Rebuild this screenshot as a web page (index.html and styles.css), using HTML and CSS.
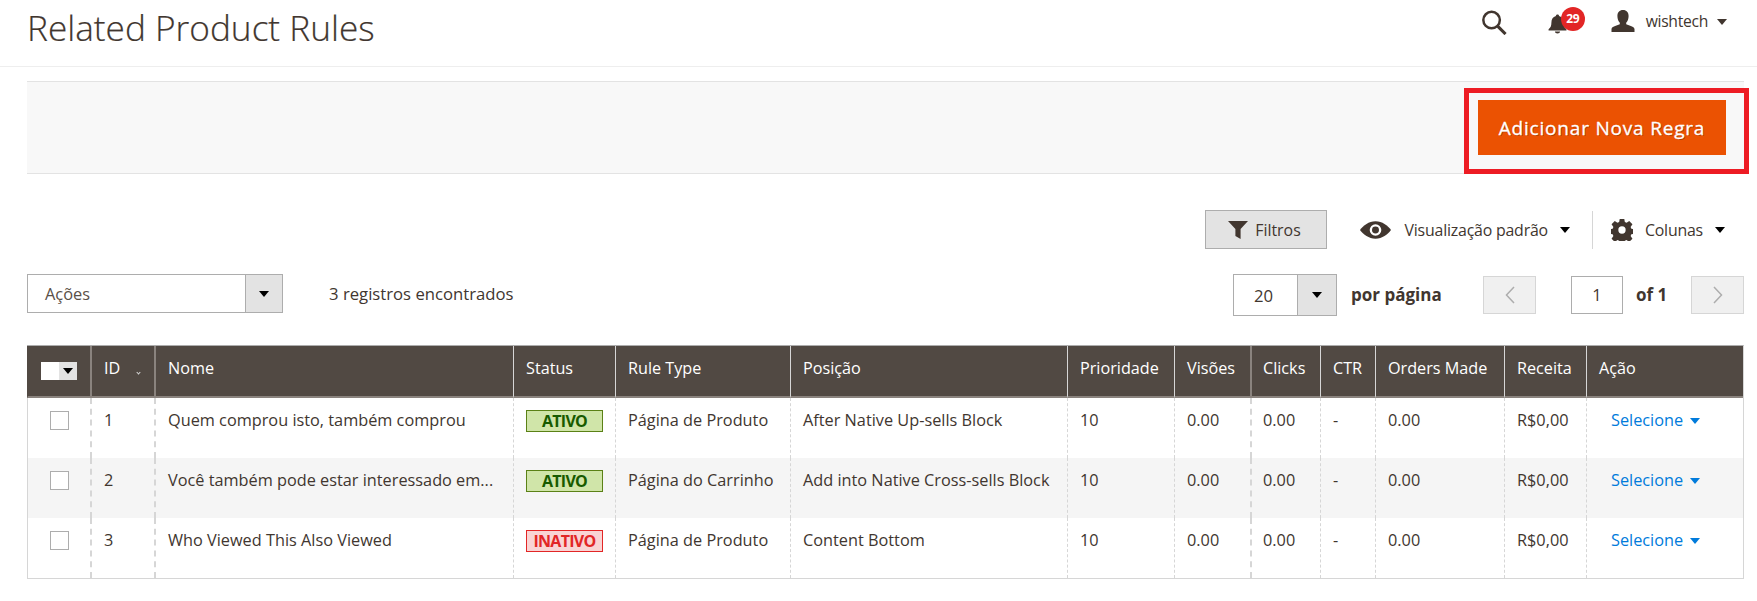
FILE: index.html
```html
<!DOCTYPE html>
<html lang="pt">
<head>
<meta charset="utf-8">
<title>Related Product Rules</title>
<link rel="stylesheet" href="styles.css">
</head>
<body>
<header class="page-header">
  <h1 class="title">Related Product Rules</h1>
  <div class="header-actions">
    <svg class="ic-search" viewBox="0 0 26 26"><circle cx="10.5" cy="10.5" r="8.6" fill="none" stroke="#41362f" stroke-width="2.6"/><path d="M17 17l8 8" stroke="#41362f" stroke-width="3.2" fill="none"/></svg>
    <span class="bell">
      <svg class="ic-bell" viewBox="0 0 20 22"><path d="M10 1.5c-1 0-1.7.7-1.7 1.6C5.2 4 3.6 6.500 3.600 10c0 3.800-1 5.500-3 7v1.400h18.800V17c-2-1.500-3-3.200-3-7 0-3.500-1.600-6-4.700-6.900 0-.9-.7-1.600-1.700-1.600z" fill="#41362f"/><path d="M7.300 19.400h5.400c0 1.300-1.200 2.100-2.700 2.100s-2.700-.8-2.700-2.100z" fill="#41362f"/></svg>
      <span class="badge">29</span>
    </span>
    <svg class="ic-user" viewBox="0 0 24 22"><path d="M12 0c3.600 0 5.600 2.500 5.600 6 0 3-1 5.300-2.400 6.700v1.600c3.400 1.300 7.800 2.300 8.300 4.600V22H.5v-3.100c.5-2.300 4.900-3.300 8.300-4.600v-1.600C7.400 11.300 6.400 9 6.400 6c0-3.500 2-6 5.600-6z" fill="#41362f"/></svg>
    <span class="user-name">wishtech</span>
    <span class="caret caret-user"></span>
  </div>
</header>

<main class="content">
  <section class="action-bar">
    <button class="primary" type="button">Adicionar Nova Regra</button>
    <span class="highlight"></span>
  </section>

  <section class="tools">
    <button class="filter-btn" type="button">
      <svg class="ic-filter" viewBox="0 0 20 18"><path d="M0 0h20L12.600 8V18L7.400 15V8z" fill="#41362f"/></svg>
      Filtros
    </button>
    <svg class="ic-eye" viewBox="0 0 32 18"><path d="M16 0c7 0 12.500 4.500 16 9-3.500 4.500-9 9-16 9S3.500 13.500 0 9c3.500-4.500 9-9 16-9z" fill="#41362f"/><circle cx="16" cy="9" r="6" fill="#fff"/><circle cx="16" cy="9" r="3.600" fill="#41362f"/></svg>
    <span class="tool-label view-label">Visualização padrão</span>
    <span class="caret caret-view"></span>
    <span class="tool-sep"></span>
    <svg class="ic-gear" viewBox="0 0 24 24"><path fill-rule="evenodd" d="M9.500 0h5l.6 3.400 1.900.8 2.900-2 3.500 3.500-2 2.900.8 1.900 3.400.6v5l-3.400.6-.8 1.900 2 2.900-3.500 3.500-2.900-2-1.900.8-.6 3.400h-5l-.6-3.400-1.900-.8-2.900 2-3.500-3.500 2-2.900-.8-1.900-3.400-.6v-5l3.400-.6.8-1.900-2-2.900 3.500-3.500 2.900 2 1.900-.8zM12 8a4 4 0 1 0 0 8 4 4 0 0 0 0-8z" fill="#41362f"/></svg>
    <span class="tool-label col-label">Colunas</span>
    <span class="caret caret-col"></span>
  </section>

  <section class="pager-row">
    <div class="select select-actions"><span class="select-value">Ações</span><span class="select-arrow"><span class="caret"></span></span></div>
    <span class="count">3 registros encontrados</span>
    <div class="select select-size"><span class="select-value">20</span><span class="select-arrow"><span class="caret"></span></span></div>
    <span class="per-page">por página</span>
    <span class="page-btn"><svg viewBox="0 0 10 18"><path d="M9 1L1.500 9 9 17" fill="none" stroke="#adadad" stroke-width="1.500"/></svg></span>
    <span class="page-input">1</span>
    <span class="of">of 1</span>
    <span class="page-btn"><svg viewBox="0 0 10 18"><path d="M1 1l7.500 8L1 17" fill="none" stroke="#adadad" stroke-width="1.500"/></svg></span>
  </section>

  <table class="grid">
    <colgroup>
      <col class="c-check"><col class="c-id"><col class="c-name"><col class="c-status"><col class="c-type"><col class="c-pos"><col class="c-prio"><col class="c-views"><col class="c-clicks"><col class="c-ctr"><col class="c-orders"><col class="c-rev"><col class="c-act">
    </colgroup>
    <thead>
      <tr>
        <th class="check-head"><span class="multi"><span class="multi-box"></span><span class="multi-arrow"><span class="caret"></span></span></span></th>
        <th class="thick lead">ID<span class="sort"></span></th>
        <th class="thick lead">Nome</th>
        <th>Status</th>
        <th>Rule Type</th>
        <th>Posição</th>
        <th>Prioridade</th>
        <th>Visões</th>
        <th class="thick">Clicks</th>
        <th>CTR</th>
        <th>Orders Made</th>
        <th>Receita</th>
        <th>Ação</th>
      </tr>
    </thead>
    <tbody>
      <tr>
        <td class="check-cell"><span class="box"></span></td><td class="thick lead">1</td><td class="thick lead">Quem comprou isto, também comprou</td>
        <td class="status-cell"><span class="status on">ATIVO</span></td><td>Página de Produto</td><td>After Native Up-sells Block</td><td>10</td><td>0.00</td><td class="thick">0.00</td><td>-</td><td>0.00</td><td>R$0,00</td>
        <td class="act-cell"><a class="act">Selecione</a><span class="caret caret-blue"></span></td>
      </tr>
      <tr class="alt">
        <td class="check-cell"><span class="box"></span></td><td class="thick lead">2</td><td class="thick lead">Você também pode estar interessado em...</td>
        <td class="status-cell"><span class="status on">ATIVO</span></td><td>Página do Carrinho</td><td>Add into Native Cross-sells Block</td><td>10</td><td>0.00</td><td class="thick">0.00</td><td>-</td><td>0.00</td><td>R$0,00</td>
        <td class="act-cell"><a class="act">Selecione</a><span class="caret caret-blue"></span></td>
      </tr>
      <tr>
        <td class="check-cell"><span class="box"></span></td><td class="thick lead">3</td><td class="thick lead">Who Viewed This Also Viewed</td>
        <td class="status-cell"><span class="status off">INATIVO</span></td><td>Página de Produto</td><td>Content Bottom</td><td>10</td><td>0.00</td><td class="thick">0.00</td><td>-</td><td>0.00</td><td>R$0,00</td>
        <td class="act-cell"><a class="act">Selecione</a><span class="caret caret-blue"></span></td>
      </tr>
    </tbody>
  </table>
</main>
</body>
</html>
```

FILE: styles.css
```css
* { box-sizing: border-box; }
html, body { margin: 0; padding: 0; }
body {
  background: #fff;
  color: #41362f;
  font-family: "Open Sans", "Noto Sans", sans-serif;
  font-size: 16.4px;
  overflow: hidden;
  height: 601px;
}

/* header */
.page-header {
  height: 67px;
  border-bottom: 1px solid #eeeeee;
  padding-left: 27px;
  display: flex;
  align-items: flex-start;
  justify-content: space-between;
}
.title {
  margin: 0;
  padding-top: 4px;
  font-size: 35.2px;
  line-height: 46px;
  font-weight: 300;
  color: #41362f;
  -webkit-text-stroke: 0.2px #41362f;
}
.header-actions { display: flex; align-items: flex-start; padding-top: 10px; padding-right: 30px; }
.ic-search { width: 26px; height: 25px; display: block; }
.bell { position: relative; display: block; width: 20px; height: 22px; margin-left: 41px; }
.ic-bell { width: 19px; height: 21px; display: block; margin-top: 3px; }
.badge {
  position: absolute;
  left: 13px;
  top: -3px;
  width: 24px;
  height: 24px;
  border-radius: 50%;
  background: #e22626;
  color: #fff;
  font-size: 12px;
  font-weight: 700;
  line-height: 24px;
  text-align: center;
  letter-spacing: -0.5px;
}
.ic-user { width: 24px; height: 22px; display: block; margin-left: 43px; }
.user-name { font-size: 15.7px; line-height: 22px; margin-left: 11px; letter-spacing: -0.3px; }
.caret {
  display: inline-block;
  width: 0;
  height: 0;
  border-left: 5px solid transparent;
  border-right: 5px solid transparent;
  border-top: 6px solid #000;
}
.caret-user { border-top-color: #41362f; margin-left: 9px; margin-top: 9px; }

/* action bar */
.content { padding: 14px 13px 0 27px; }
.action-bar {
  position: relative;
  height: 93px;
  background: #f8f8f8;
  border-top: 1px solid #e3e3e3;
  border-bottom: 1px solid #e3e3e3;
  display: flex;
  justify-content: flex-end;
  align-items: flex-start;
  padding: 18px 18px 0 0;
}
.primary {
  width: 248px;
  height: 55px;
  border: 0;
  background: #eb5202;
  color: #fff;
  font-family: inherit;
  font-size: 19px;
  font-weight: 400;
  letter-spacing: 0.8px;
  text-shadow: 1px 1px 0 rgba(0,0,0,.25);
  padding: 0;
  -webkit-text-stroke: 0.3px #fff;
}
.highlight {
  position: absolute;
  left: 1437px;
  top: 6px;
  width: 285px;
  height: 86px;
  border: 5px solid #ed1c24;
  pointer-events: none;
}

/* tools row */
.tools { display: flex; align-items: center; justify-content: flex-end; height: 39px; margin-top: 36px; }
.filter-btn {
  width: 122px;
  height: 39px;
  background: #e3e3e3;
  border: 1px solid #adadad;
  color: #41362f;
  font-family: inherit;
  font-size: 15.9px;
  display: flex;
  align-items: center;
  justify-content: center;
  gap: 7px;
  padding: 0 0 0 2px;
  font-weight: 400;
}
.ic-filter { width: 20px; height: 18px; display: block; margin-left: -4px; }
.ic-eye { width: 31px; height: 18px; display: block; margin-left: 33px; }
.tool-label { font-size: 15.9px; letter-spacing: -0.2px; white-space: nowrap; }
.view-label { margin-left: 14px; }
.caret-view { margin-left: 12px; }
.tool-sep { width: 1px; height: 38px; background: #d6d6d6; margin-left: 22px; }
.ic-gear { width: 22px; height: 22px; display: block; margin-left: 18px; }
.col-label { margin-left: 12px; }
.caret-col { margin-left: 12px; margin-right: 19px; }

/* pager row */
.pager-row { display: flex; align-items: flex-start; height: 42px; margin-top: 25px; }
.select {
  display: flex;
  border: 1px solid #adadad;
  background: #fff;
}
.select-value { flex: 1; display: flex; align-items: center; }
.select-arrow {
  background: #e3e3e3;
  border-left: 1px solid #adadad;
  display: flex;
  align-items: center;
  justify-content: center;
}
.select-actions { width: 256px; height: 39px; }
.select-actions .select-value { padding-left: 17px; color: #5a5047; }
.select-actions .select-arrow { width: 37px; }
.count { margin-left: 46px; line-height: 39px; font-size: 16.7px; }
.select-size { width: 104px; height: 42px; margin-left: auto; }
.select-size .select-value { padding-left: 20px; font-size: 16.7px; }
.select-size .select-arrow { width: 39px; }
.per-page { font-weight: 700; font-size: 17px; padding-left: 14px; width: 146px; line-height: 42px; }
.page-btn {
  width: 53px;
  height: 38px;
  margin-top: 2px;
  background: #f0f0f0;
  border: 1px solid #d6d6d6;
  display: flex;
  align-items: center;
  justify-content: center;
}
.page-btn svg { width: 10px; height: 18px; display: block; }
.page-input {
  width: 52px;
  height: 38px;
  margin-top: 2px;
  margin-left: 35px;
  border: 1px solid #adadad;
  text-align: center;
  line-height: 36px;
}
.of { font-weight: 700; font-size: 17px; padding-left: 13px; width: 68px; line-height: 42px; }

/* grid */
.grid {
  margin-top: 29px;
  width: 1716px;
  table-layout: fixed;
  border-collapse: separate;
  border-spacing: 0;
  border-top: 1px solid #adadad;
  border-bottom: 1px solid #d6d6d6;
  border-right: 1px solid #d6d6d6;
}
.c-check { width: 63px; } .c-id { width: 64px; } .c-name { width: 359px; }
.c-status { width: 102px; } .c-type { width: 175px; } .c-pos { width: 277px; }
.c-prio { width: 107px; } .c-views { width: 76px; } .c-clicks { width: 70px; }
.c-ctr { width: 55px; } .c-orders { width: 129px; } .c-rev { width: 82px; }
.c-act { width: 157px; }

.grid th {
  height: 52px;
  background: #514943;
  color: #fff;
  font-weight: 400;
  font-size: 16.2px;
  text-align: left;
  padding: 0 0 6px 12px;
  border-left: 1px solid #d6d6d6;
  border-bottom: 2px solid #8a837e;
  white-space: nowrap;
}
.grid th:first-child { border-left: 1px solid #514943; }
.grid th.thick { border-left: 2px solid #8a837e; padding-left: 11px; }
.grid th.lead { padding-left: 12px; }
.grid th.check-head { padding: 0 0 1px; }
.multi { display: flex; width: 36px; height: 18px; margin-left: 13px; }
.multi-box { width: 18px; background: #fff; }
.multi-arrow { width: 18px; background: #e3e3e3; display: flex; align-items: center; justify-content: center; }
.sort {
  display: inline-block;
  width: 3px;
  height: 3px;
  border-right: 1px solid #d6d6d6;
  border-bottom: 1px solid #d6d6d6;
  transform: rotate(45deg);
  margin-left: 17px;
}
.grid td {
  height: 60px;
  vertical-align: top;
  padding: 11px 0 0 12px;
  line-height: 22px;
  font-size: 16.3px;
  color: #41362f;
  border-left: 1px dashed #d6d6d6;
  white-space: nowrap;
}
.grid td:first-child { border-left: 1px solid #d6d6d6; }
.grid td.thick { border-left: 2px dashed #d6d6d6; padding-left: 11px; }
.grid td.lead { padding-left: 12px; }
.grid .alt td { background: #f5f5f5; }
.grid td.check-cell { padding: 13px 0 0 22px; }
.box { display: block; width: 19px; height: 19px; background: #fff; border: 1px solid #adadad; }
.grid td.status-cell { padding: 12px 0 0 12px; }
.status {
  display: block;
  width: 77px;
  height: 22px;
  line-height: 20px;
  text-align: center;
  font-weight: 700;
  font-size: 16px;
  letter-spacing: -0.7px;
  border: 1px solid;
}
.on { background: #d0e5a9; border-color: #5b8116; color: #185b00; }
.off { background: #f9d4d4; border-color: #e22626; color: #e22626; }
.grid td.act-cell { padding-left: 24px; }
.act { color: #007bdb; }
.caret-blue { border-top-color: #007bdb; margin-left: 7px; vertical-align: 2px; }
```
